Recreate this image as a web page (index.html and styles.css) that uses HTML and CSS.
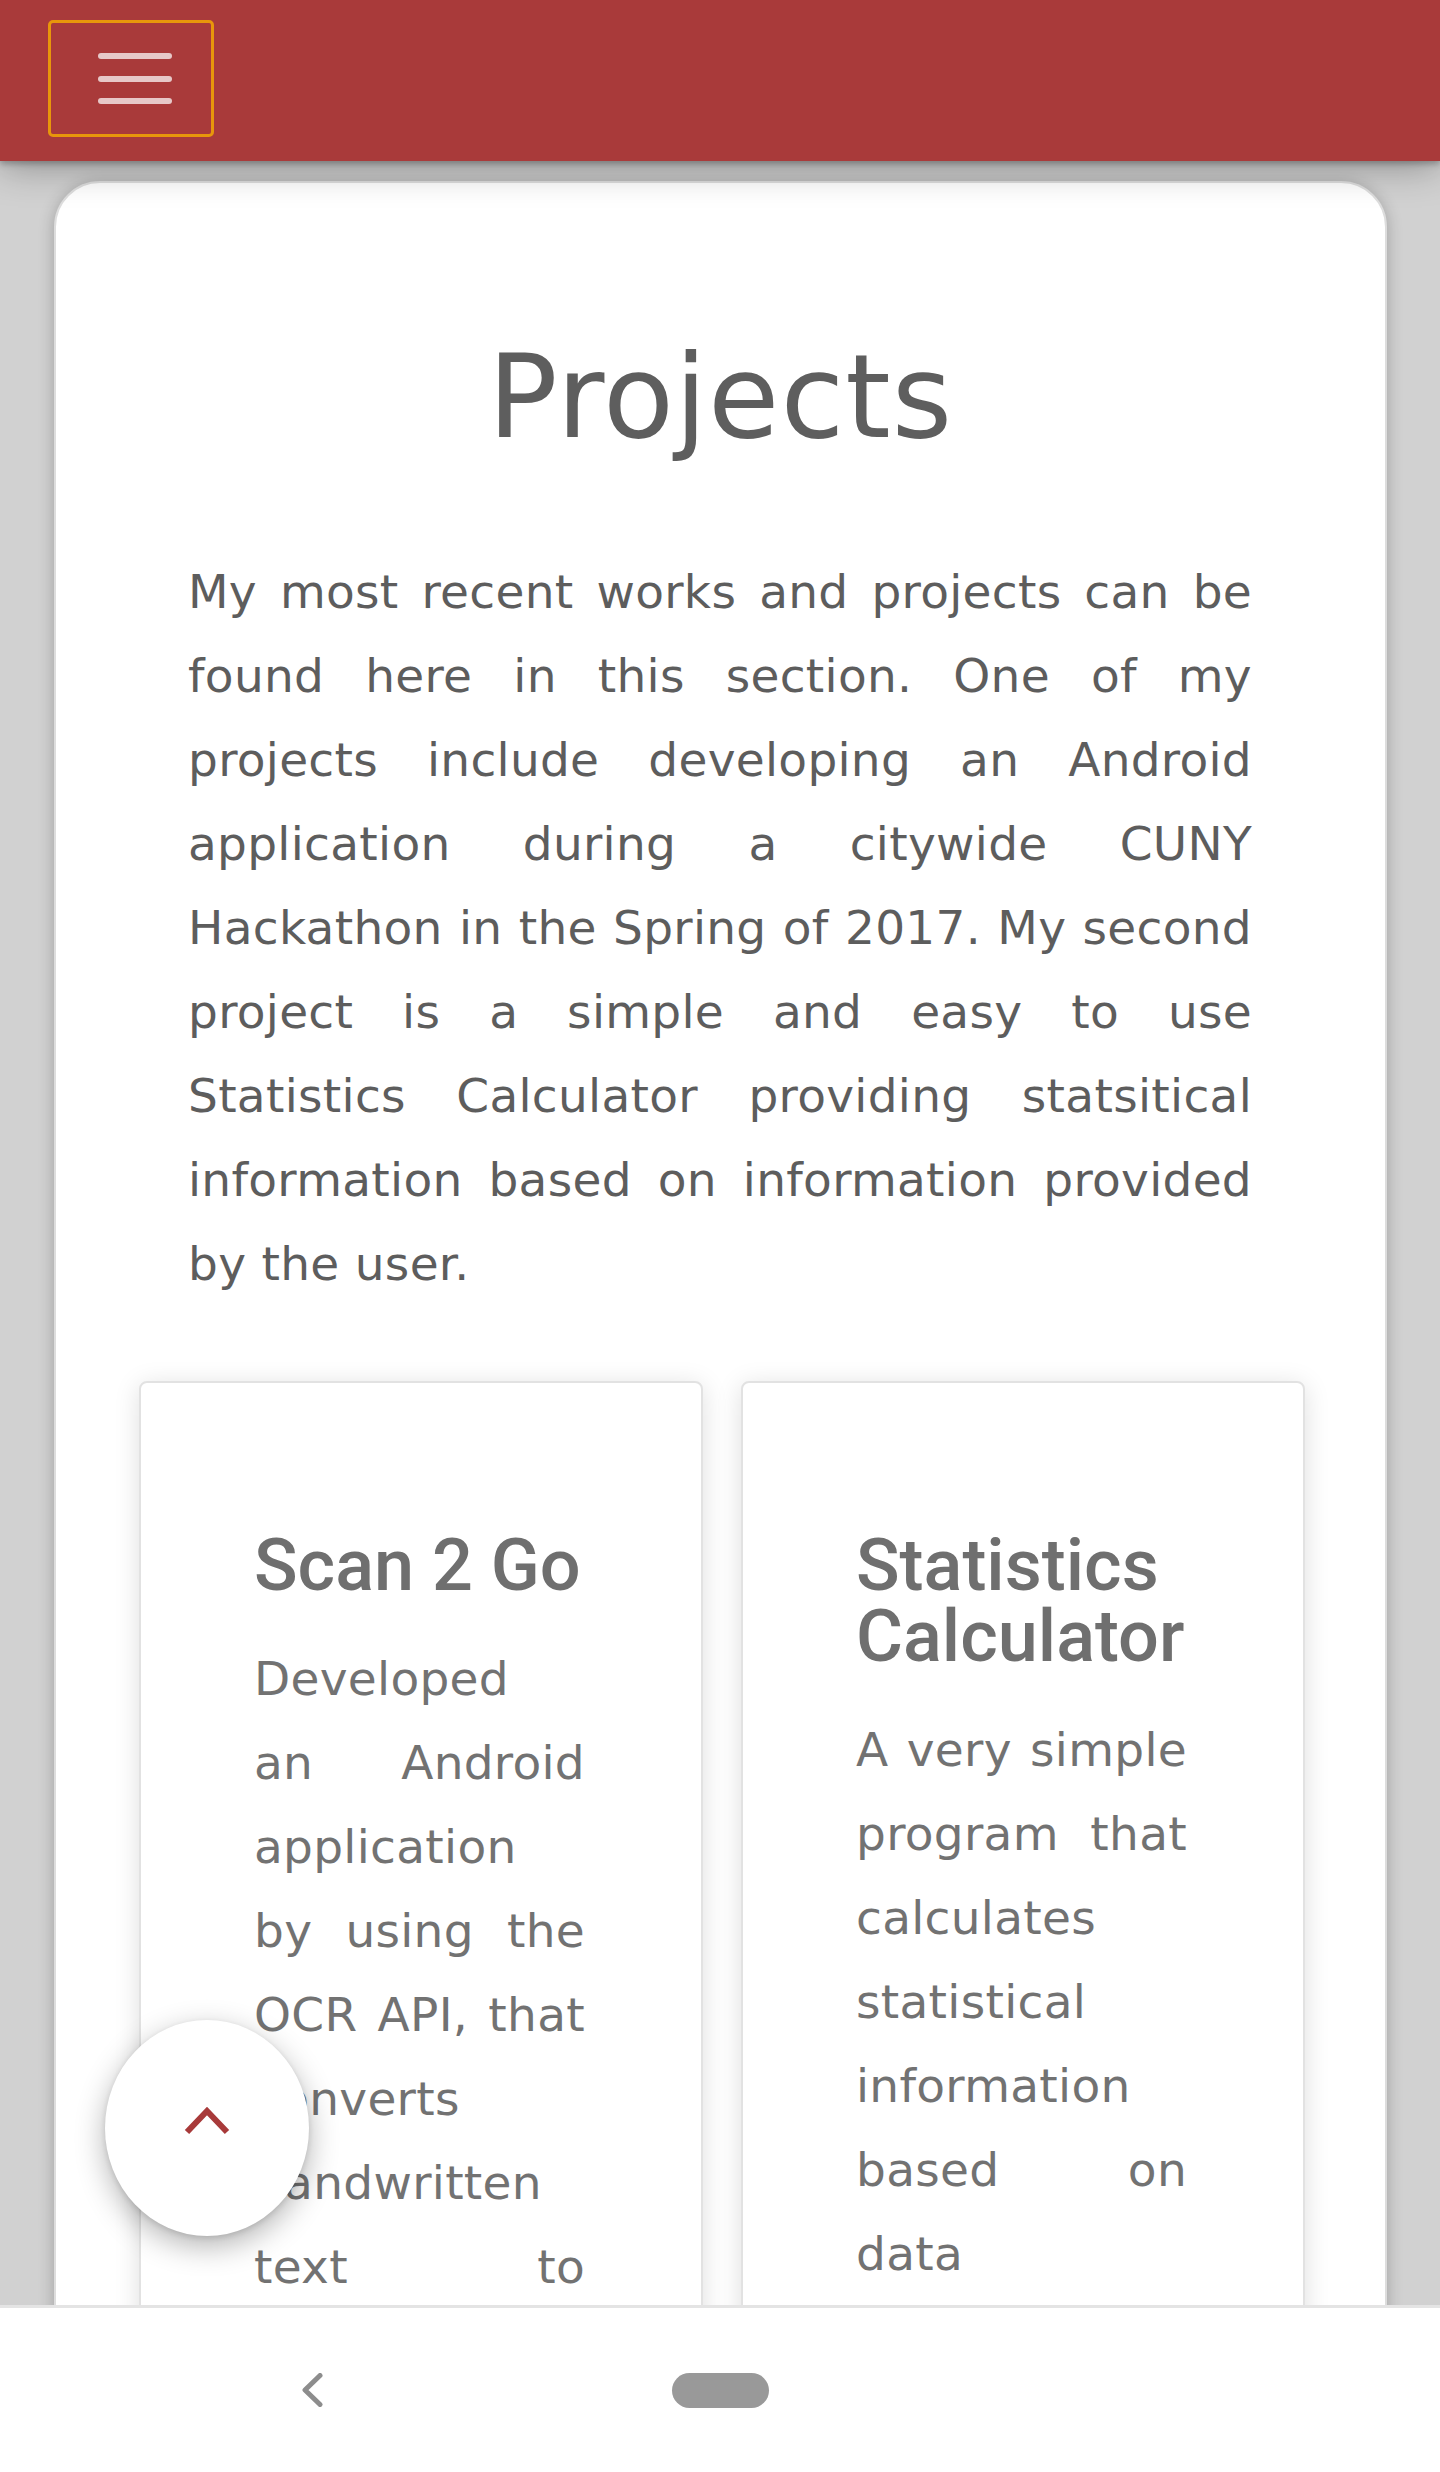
FILE: index.html
```html
<!DOCTYPE html>
<html lang="en">
<head>
<meta charset="utf-8">
<title>Projects</title>
<link rel="stylesheet" href="styles.css">
</head>
<body>
<header class="topbar">
  <button class="menu-btn" aria-label="Menu">
    <span class="bar"></span><span class="bar"></span><span class="bar"></span>
  </button>
</header>

<main class="sheet">
  <h1 class="sheet-title">Projects</h1>
  <p class="lead">
    <span class="ln">My most recent works and projects can be</span>
    <span class="ln">found here in this section. One of my</span>
    <span class="ln">projects include developing an Android</span>
    <span class="ln">application during a citywide CUNY</span>
    <span class="ln">Hackathon in the Spring of 2017. My second</span>
    <span class="ln">project is a simple and easy to use</span>
    <span class="ln">Statistics Calculator providing statsitical</span>
    <span class="ln">information based on information provided</span>
    <span class="ln last">by the user.</span>
  </p>

  <section class="projects">
    <article class="project">
      <h3 class="project-title">Scan 2 Go</h3>
      <p class="project-text">
        <span class="ln">Developed</span>
        <span class="ln">an Android</span>
        <span class="ln">application</span>
        <span class="ln">by using the</span>
        <span class="ln">OCR API, that</span>
        <span class="ln">converts</span>
        <span class="ln">handwritten</span>
        <span class="ln">text to</span>
        <span class="ln last">digital format.</span>
      </p>
    </article>
    <article class="project">
      <h3 class="project-title">Statistics Calculator</h3>
      <p class="project-text">
        <span class="ln">A very simple</span>
        <span class="ln">program that</span>
        <span class="ln">calculates</span>
        <span class="ln">statistical</span>
        <span class="ln">information</span>
        <span class="ln">based on</span>
        <span class="ln">data</span>
        <span class="ln last">provided.</span>
      </p>
    </article>
  </section>
</main>

<button class="fab" aria-label="Back to top">
  <svg width="50" height="34" viewBox="0 0 50 34" aria-hidden="true">
    <polyline points="5,29 25,8 45,29" fill="none" stroke="#a83a3a" stroke-width="6"/>
  </svg>
</button>

<nav class="sysnav">
  <svg class="nav-back" width="22" height="34" viewBox="0 0 22 34" aria-hidden="true">
    <polyline points="19,2.5 4,17 19,31.5" fill="none" stroke="#8d8d8d" stroke-width="5" stroke-linecap="round" stroke-linejoin="round"/>
  </svg>
  <span class="nav-home"></span>
  <span class="nav-spacer"></span>
</nav>
</body>
</html>
```

FILE: styles.css
```css
* { box-sizing: border-box; }

html, body {
  margin: 0;
  padding: 0;
}

body {
  height: 2472px;
  overflow: hidden;
  background: #d1d1d1;
  font-family: "DejaVu Sans", "Noto Sans", sans-serif;
  color: #5f5f5f;
}

/* ---------- top bar ---------- */
.topbar {
  position: relative;
  z-index: 2;
  height: 161px;
  background: #a93a3a;
  display: flex;
  align-items: flex-start;
  padding: 20px 0 0 48px;
  box-shadow: 0 3px 6px rgba(0, 0, 0, 0.25), 0 6px 36px rgba(0, 0, 0, 0.32);
}

.menu-btn {
  width: 166px;
  height: 117px;
  border: 3px solid #e8960b;
  border-radius: 5px;
  background: transparent;
  padding: 0;
  display: flex;
  flex-direction: column;
  align-items: center;
  justify-content: center;
  gap: 16.5px;
  cursor: pointer;
}

.menu-btn .bar {
  display: block;
  width: 74px;
  height: 6px;
  border-radius: 3px;
  background: rgba(255, 255, 255, 0.72);
  margin-left: 7px;
}

/* ---------- main sheet ---------- */
.sheet {
  position: relative;
  z-index: 1;
  margin: 20px 53px 0 54px;
  background: #ffffff;
  border: 2px solid #dddddd;
  border-radius: 46px 46px 0 0;
  padding-top: 151px;
  min-height: 2400px;
  box-shadow: 0 2px 16px rgba(0, 0, 0, 0.24);
}

.sheet-title {
  margin: 0;
  text-align: center;
  font-family: "DejaVu Sans", sans-serif;
  font-weight: normal;
  font-size: 116px;
  letter-spacing: 1px;
  line-height: 126px;
  color: #5e5e5e;
}

.ln {
  display: block;
  text-align: justify;
  text-align-last: justify;
}

.ln.last {
  text-align-last: left;
}

.lead {
  margin: 90px 0 0;
  padding: 0 133px 0 132px;
  font-size: 47px;
  letter-spacing: 0.3px;
  line-height: 84px;
  color: #5d5d5d;
}

/* ---------- project cards ---------- */
.projects {
  margin-top: 75px;
  padding: 0 80px 0 83px;
  display: flex;
  gap: 38px;
  align-items: flex-start;
}

.project {
  flex: 1 1 0;
  min-height: 1100px;
  background: #ffffff;
  border: 2px solid #e2e2e2;
  border-radius: 8px;
  padding: 147px 116px 0 113px;
  box-shadow: 0 4px 26px rgba(0, 0, 0, 0.13);
}

.project-title {
  margin: 0;
  font-family: Roboto, "Liberation Sans", sans-serif;
  font-weight: 500;
  font-size: 72px;
  line-height: 71px;
  color: #6f6f6f;
}

.project-text {
  margin: 36px 0 0;
  font-size: 47px;
  letter-spacing: 0.3px;
  line-height: 84px;
  color: #727272;
}

/* ---------- floating back-to-top button ---------- */
.fab {
  position: fixed;
  left: 105px;
  top: 2020px;
  z-index: 5;
  width: 204px;
  height: 216px;
  border: none;
  border-radius: 50%;
  background: #ffffff;
  padding: 0 0 16px;
  display: flex;
  align-items: center;
  justify-content: center;
  box-shadow: 0 10px 30px rgba(0, 0, 0, 0.3), 0 2px 6px rgba(0, 0, 0, 0.12);
  cursor: pointer;
}

/* ---------- android system navigation ---------- */
.sysnav {
  position: fixed;
  left: 0;
  right: 0;
  bottom: 0;
  z-index: 4;
  height: 167px;
  background: #ffffff;
  border-top: 3px solid #e4e4e4;
  display: flex;
  align-items: center;
  justify-content: center;
  gap: 349px;
}

.nav-back {
  display: block;
}

.nav-home {
  display: block;
  width: 97px;
  height: 35px;
  border-radius: 18px;
  background: #999999;
}

.nav-spacer {
  display: block;
  width: 22px;
}
```
